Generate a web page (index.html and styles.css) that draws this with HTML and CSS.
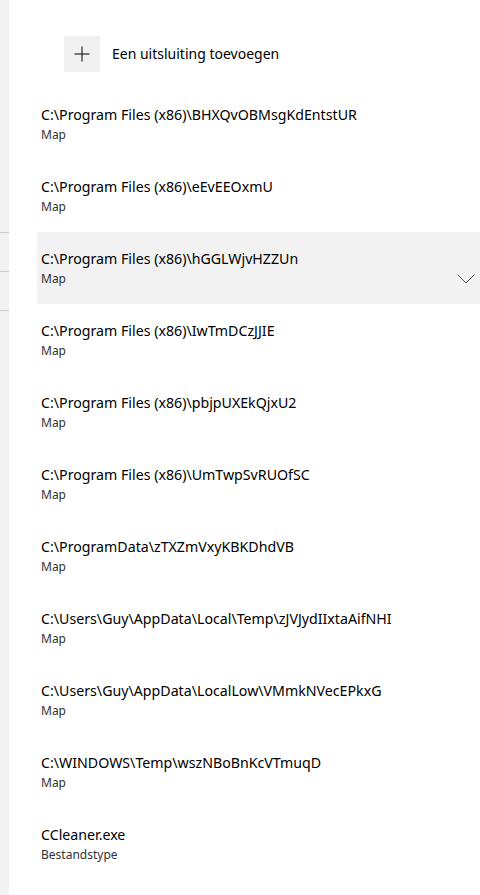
FILE: index.html
```html
<!DOCTYPE html>
<html lang="nl">

<head>
  <meta charset="UTF-8">
  <meta name="viewport" content="width=device-width, initial-scale=1.0">
  <title>Uitsluitingen</title>
  <link rel="stylesheet" href="styles.css">
</head>

<body>
  <div class="page">
    <div class="side_strip">
      <div class="strip_cell"></div>
      <div class="strip_cell"></div>
      <div class="strip_cell"></div>
    </div>

    <div class="main">
      <div class="add_row">
        <div class="add_btn">
          <svg width="16" height="16" viewBox="0 0 16 16">
            <path d="M8 0.5V15.5M0.5 8H15.5" stroke="#000" stroke-width="1" fill="none" />
          </svg>
        </div>
        <span class="add_label">Een uitsluiting toevoegen</span>
      </div>

      <div class="excl_list">
        <div class="excl_item">
          <div class="excl_path">C:\Program Files (x86)\BHXQvOBMsgKdEntstUR</div>
          <div class="excl_type">Map</div>
        </div>
        <div class="excl_item">
          <div class="excl_path">C:\Program Files (x86)\eEvEEOxmU</div>
          <div class="excl_type">Map</div>
        </div>
        <div class="excl_item selected">
          <div class="excl_path">C:\Program Files (x86)\hGGLWjvHZZUn</div>
          <div class="excl_type">Map</div>
          <svg class="chevron" width="18" height="10" viewBox="0 0 18 10">
            <path d="M0.5 0.5L9 9L17.5 0.5" stroke="#555" stroke-width="1" fill="none" />
          </svg>
        </div>
        <div class="excl_item">
          <div class="excl_path">C:\Program Files (x86)\IwTmDCzJJIE</div>
          <div class="excl_type">Map</div>
        </div>
        <div class="excl_item">
          <div class="excl_path">C:\Program Files (x86)\pbjpUXEkQjxU2</div>
          <div class="excl_type">Map</div>
        </div>
        <div class="excl_item">
          <div class="excl_path">C:\Program Files (x86)\UmTwpSvRUOfSC</div>
          <div class="excl_type">Map</div>
        </div>
        <div class="excl_item">
          <div class="excl_path">C:\ProgramData\zTXZmVxyKBKDhdVB</div>
          <div class="excl_type">Map</div>
        </div>
        <div class="excl_item">
          <div class="excl_path">C:\Users\Guy\AppData\Local\Temp\zJVJydIIxtaAifNHI</div>
          <div class="excl_type">Map</div>
        </div>
        <div class="excl_item">
          <div class="excl_path">C:\Users\Guy\AppData\LocalLow\VMmkNVecEPkxG</div>
          <div class="excl_type">Map</div>
        </div>
        <div class="excl_item">
          <div class="excl_path">C:\WINDOWS\Temp\wszNBoBnKcVTmuqD</div>
          <div class="excl_type">Map</div>
        </div>
        <div class="excl_item">
          <div class="excl_path">CCleaner.exe</div>
          <div class="excl_type">Bestandstype</div>
        </div>
      </div>
    </div>
  </div>
</body>

</html>
```

FILE: styles.css
```css
* {
  box-sizing: border-box;
}

body {
  font-family: "Noto Sans", "Open Sans", sans-serif;
  color: #000;
  background-color: #fff;
  margin: 0;
  overflow: hidden;
}

.page {
  display: flex;
  height: 895px;
}

.side_strip {
  width: 9px;
  flex-shrink: 0;
  background-color: #f2f2f2;
  padding-top: 232px;
}

.strip_cell {
  height: 39px;
  border-top: 1px solid #cccccc;
}

.main {
  flex: 1;
  margin-left: 28px;
}

.add_row {
  display: flex;
  align-items: flex-start;
  padding-top: 36px;
  padding-left: 27px;
  height: 88px;
}

.add_btn {
  width: 36px;
  height: 36px;
  background-color: #f0f0f0;
  display: flex;
  align-items: center;
  justify-content: center;
}

.add_label {
  font-size: 14px;
  line-height: 36px;
  margin-left: 12px;
  color: #000;
}

.excl_item {
  position: relative;
  height: 72px;
  padding-left: 4px;
  padding-top: 17px;
}

.excl_item.selected {
  background-color: #f2f2f2;
}

.excl_path {
  font-size: 14.2px;
  line-height: 20px;
  color: #000;
  white-space: nowrap;
}

.excl_type {
  font-size: 12px;
  line-height: 18px;
  margin-top: 1px;
  color: #333;
}

.chevron {
  position: absolute;
  right: 5px;
  top: 42px;
}
```
